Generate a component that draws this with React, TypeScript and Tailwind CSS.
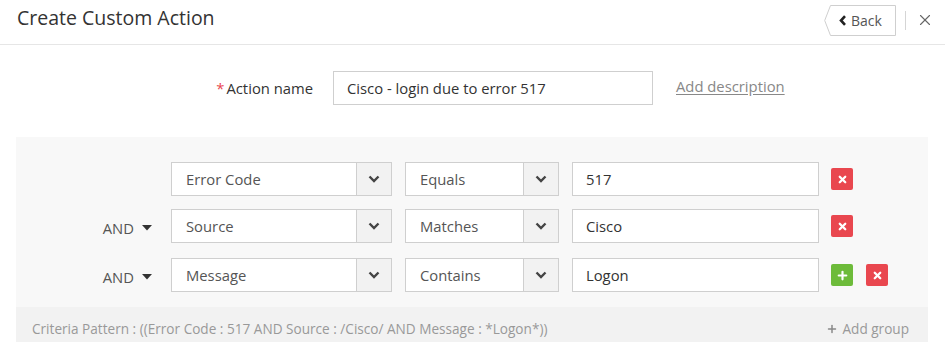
import { X, Plus } from 'lucide-react';

const rows = [
  { join: '', field: 'Error Code', op: 'Equals', value: '517', add: false, mt: '' },
  { join: 'AND', field: 'Source', op: 'Matches', value: 'Cisco', add: false, mt: 'mt-[13px]' },
  { join: 'AND', field: 'Message', op: 'Contains', value: 'Logon', add: true, mt: 'mt-[15px]' },
];

const Chevron = () => (
  <svg width="12" height="8" viewBox="0 0 12 8">
    <path d="M1.5 1.5 L6 6 L10.5 1.5" fill="none" stroke="#444" strokeWidth="2.4" />
  </svg>
);

const SelectBox = ({ label, width }: { label: string; width: string }) => (
  <div className={`flex h-[34px] border border-[#cfcfcf] bg-white ${width}`}>
    <div className="flex flex-1 items-center pl-[14px] text-[14.8px] text-[#555]">{label}</div>
    <div className="flex w-[35px] items-center justify-center border-l border-[#cfcfcf] bg-[#f2f2f2]">
      <Chevron />
    </div>
  </div>
);

const IconBtn = ({ kind }: { kind: 'add' | 'del' }) => (
  <div
    className={`flex h-[22px] w-[22px] items-center justify-center rounded-[2px] ${
      kind === 'add' ? 'bg-[#6dbb3a]' : 'bg-[#e9474f]'
    }`}>
    {kind === 'add' ? (
      <Plus size={13} color="white" strokeWidth={4} />
    ) : (
      <X size={11} color="white" strokeWidth={5} />
    )}
  </div>
);

export default function App() {
  return (
    <div className="h-[342px] w-[945px] overflow-hidden bg-white font-['Open_Sans',sans-serif] text-[#333]">
      {/* header */}
      <div className="flex h-[45px] items-center border-b border-[#e6e6e6] pl-[17px] pr-[11px]">
        <h1 className="flex-1 pb-[8px] text-[19.5px] leading-none text-[#333]">Create Custom Action</h1>
        <div className="relative mb-[4px] flex h-[31px] w-[72px] items-center pl-[15px] text-[14px] text-[#555]">
          <svg className="absolute left-0 top-0" width="72" height="31" viewBox="0 0 72 31">
            <path d="M6.5 0.5 H71.5 V30.5 H6.5 L0.7 15.5 Z" fill="white" stroke="#cfcfcf" />
          </svg>
          <svg className="relative mr-[4px]" width="8" height="11" viewBox="0 0 8 11">
            <path d="M6 1.2 L2 5.5 L6 9.8" fill="none" stroke="#222" strokeWidth="2.6" />
          </svg>
          <span className="relative">Back</span>
        </div>
        <div className="mb-[4px] ml-[9px] h-[19px] w-px bg-[#d5d5d5]" />
        <X className="mb-[4px] ml-[10px]" size={18} color="#666" strokeWidth={1.5} />
      </div>

      {/* action name */}
      <div className="mt-[26px] flex items-center">
        <div className="w-[313px] text-right text-[14.8px] text-[#333]">
          <span className="mr-[2px] text-[#e9474f]">*</span>Action name
        </div>
        <div className="ml-[20px] flex h-[34px] w-[320px] items-center border border-[#cfcfcf] pl-[13px] text-[14.8px] text-[#333]">
          Cisco - login due to error 517
        </div>
        <a className="ml-[23px] pb-[4px] text-[14.8px] text-[#888] underline underline-offset-2">Add description</a>
      </div>

      {/* criteria panel */}
      <div className="ml-[16px] mt-[32px] flex w-[912px] flex-col bg-[#f8f8f8]">
        <div className="flex flex-col pb-[15px] pt-[25px]">
          {rows.map((r, i) => (
            <div key={i} className={`flex h-[34px] items-center ${r.mt}`}>
              <div className="flex w-[155px] items-center justify-end pr-[19px] text-[14.8px] text-[#555]">
                {r.join && (
                  <>
                    <span className="mt-[4px]">AND</span>
                    <svg className="ml-[8px] mt-[4px]" width="10" height="6" viewBox="0 0 10 6">
                      <path d="M0 0 H10 L5 5.5 Z" fill="#333" />
                    </svg>
                  </>
                )}
              </div>
              <SelectBox label={r.field} width="w-[221px]" />
              <div className="ml-[13px]">
                <SelectBox label={r.op} width="w-[154px]" />
              </div>
              <div className="ml-[13px] flex h-[34px] w-[247px] items-center border border-[#cfcfcf] bg-white pl-[13px] text-[14.8px] text-[#333]">
                {r.value}
              </div>
              <div className="ml-[12px] flex gap-[13px]">
                {r.add && <IconBtn kind="add" />}
                <IconBtn kind="del" />
              </div>
            </div>
          ))}
        </div>
        <div className="flex h-[44px] items-center justify-between bg-[#f2f2f2] pl-[16px] pr-[19px] text-[13.6px] text-[#999]">
          <span>Criteria Pattern : ((Error Code : 517 AND Source : /Cisco/ AND Message : *Logon*))</span>
          <span className="flex items-center">
            <Plus size={12} color="#888" strokeWidth={3} className="mr-[4px]" />
            Add group
          </span>
        </div>
      </div>
    </div>
  );
}
